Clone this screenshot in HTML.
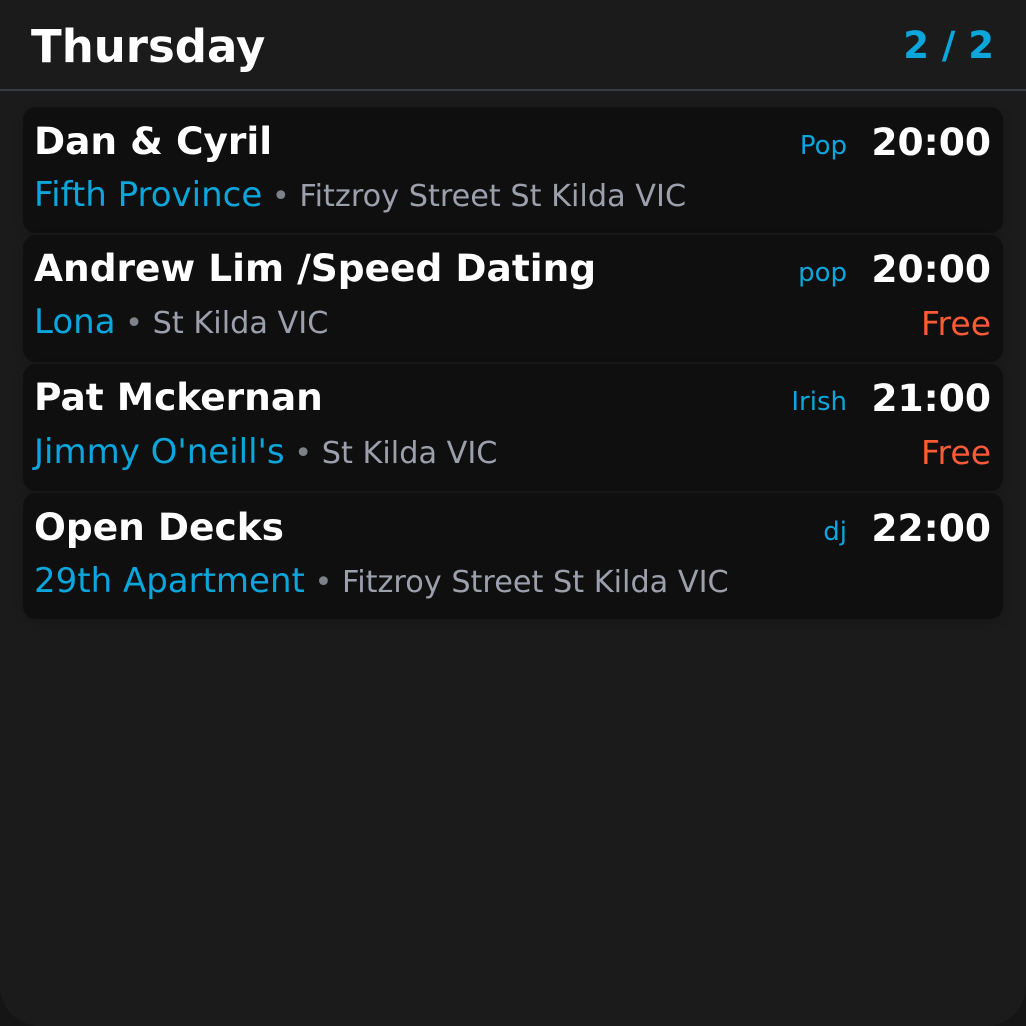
<!DOCTYPE html>
<html><head><meta charset="utf-8"><style>
html,body{margin:0;padding:0;width:1026px;height:1026px;background:#151515;overflow:hidden}
body{font-family:"DejaVu Sans","Liberation Sans",sans-serif}
#app{position:absolute;left:0;top:0;width:1026px;height:1026px;background:#1b1b1b;border-radius:0 0 40px 40px}
.t{position:absolute;white-space:nowrap;line-height:1}
.hdr{position:absolute;left:0;top:89px;width:1026px;height:2px;background:#373c46}
.card{position:absolute;left:23px;width:980px;background:#0f0f0f;border-radius:13px;box-shadow:0 4px 10px rgba(0,0,0,.15)}
.ti{font-weight:bold;color:#fff;font-size:37.5px}
.ve{color:#0aa6dc;font-size:34px}
.ad{color:#9ba0ac;font-size:30.3px}
.dot{color:#7d818a}
.g{color:#0aa6dc;font-size:26px}
.tm{font-weight:bold;color:#fff;font-size:37.6px}
.fr{color:#ff5a36;font-size:33px}
</style></head><body><div id="app">
<div class="t" style="left:31px;top:24px;font-size:45px;font-weight:bold;color:#fff">Thursday</div>
<div class="t" style="right:32px;top:27px;font-size:37px;font-weight:bold;color:#0aa6dc">2 / 2</div>
<div class="hdr"></div>

<div class="card" style="top:107px;height:126px"></div>
<div class="card" style="top:235px;height:127px"></div>
<div class="card" style="top:364px;height:127px"></div>
<div class="card" style="top:493px;height:126px"></div>

<div class="t ti" style="left:34px;top:123px">Dan &amp; Cyril</div>
<div class="t g" style="right:179px;top:133px">Pop</div>
<div class="t tm" style="right:35px;top:124px">20:00</div>
<div class="t" style="left:34px;top:178px"><span class="ve">Fifth Province</span><span class="ad"> <span class="dot">•</span> Fitzroy Street St Kilda VIC</span></div>

<div class="t ti" style="left:34px;top:250px">Andrew Lim /Speed Dating</div>
<div class="t g" style="right:179px;top:260px">pop</div>
<div class="t tm" style="right:35px;top:251px">20:00</div>
<div class="t" style="left:34px;top:305px"><span class="ve">Lona</span><span class="ad"> <span class="dot">•</span> St Kilda VIC</span></div>
<div class="t fr" style="right:35px;top:307px">Free</div>

<div class="t ti" style="left:34px;top:379px">Pat Mckernan</div>
<div class="t g" style="right:179px;top:389px">Irish</div>
<div class="t tm" style="right:35px;top:380px">21:00</div>
<div class="t" style="left:34px;top:435px"><span class="ve">Jimmy O'neill's</span><span class="ad"> <span class="dot">•</span> St Kilda VIC</span></div>
<div class="t fr" style="right:35px;top:436px">Free</div>

<div class="t ti" style="left:34px;top:509px">Open Decks</div>
<div class="t g" style="right:179px;top:519px">dj</div>
<div class="t tm" style="right:35px;top:510px">22:00</div>
<div class="t" style="left:34px;top:564px"><span class="ve">29th Apartment</span><span class="ad"> <span class="dot">•</span> Fitzroy Street St Kilda VIC</span></div>
</div></body></html>
